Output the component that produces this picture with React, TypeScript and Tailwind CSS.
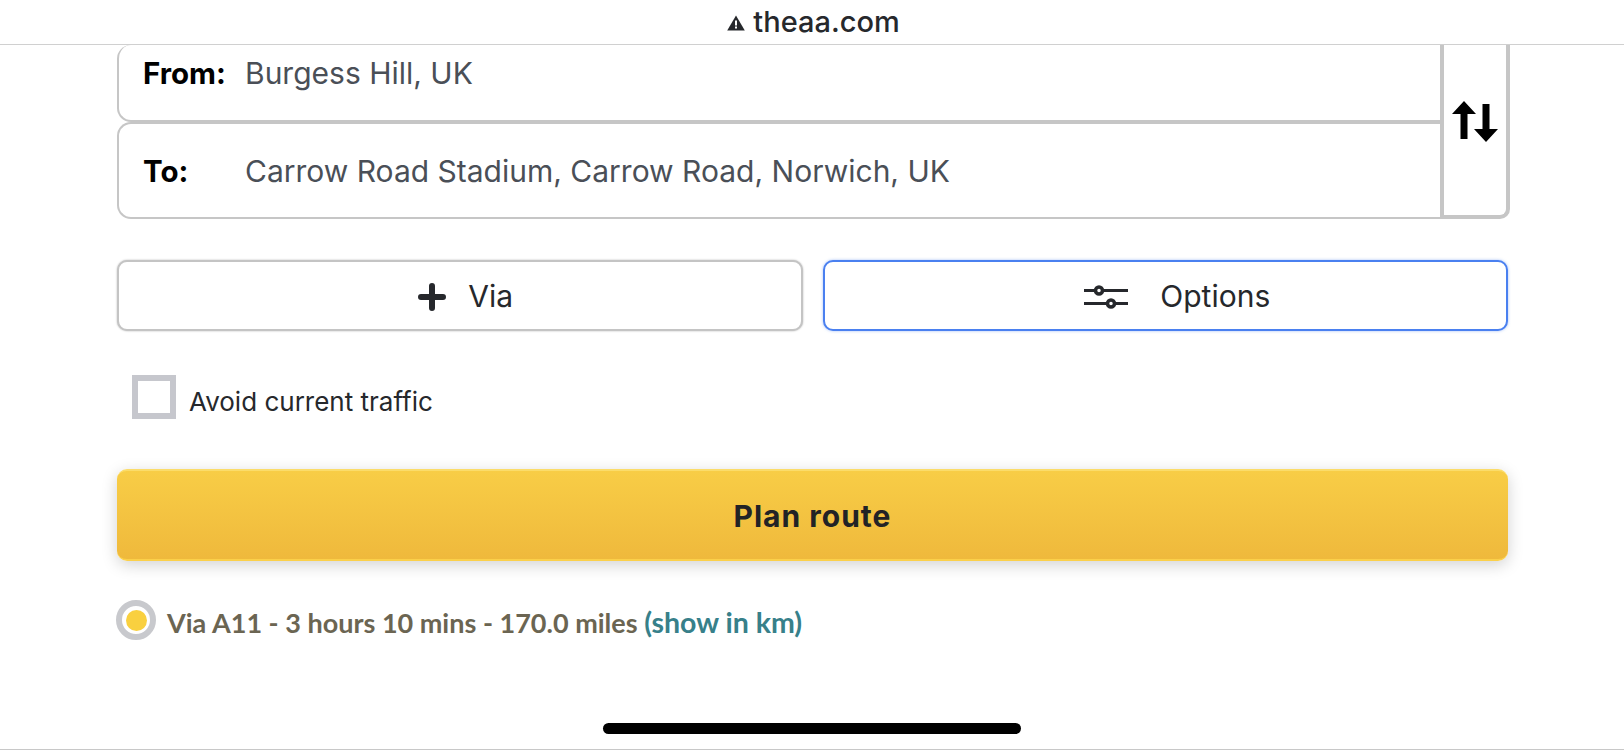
import type React from "react";

const plex = "font-['Inter','Noto_Sans',sans-serif]";

export default function App(): React.ReactElement {
  return (
    <div className={`w-[1624px] h-[750px] overflow-hidden bg-white flex flex-col ${plex}`}>
      <TopBar />
      <main className="flex-1 flex flex-col pl-[117px] pr-[116px]">
        <RouteFields />
        <div className="grid grid-cols-2 gap-[20px] mt-[41px]">
          <button className="h-[71px] flex items-center justify-center gap-[22px] pl-[12px] pt-[2px] bg-white border-2 border-[#c4c4c4] rounded-[10px] shadow-[0_0_2px_rgba(0,0,0,0.3)] text-[#26282c] text-[30px]">
            <PlusIcon />
            <span>Via</span>
          </button>
          <button className="h-[71px] flex items-center justify-center gap-[32px] pl-[24px] pt-[2px] bg-white border-2 border-[#4a80f0] rounded-[10px] shadow-[0_0_3px_rgba(74,128,240,0.5)] text-[#26282c] text-[30px]">
            <SlidersIcon />
            <span>Options</span>
          </button>
        </div>
        <label className="flex items-center gap-[13px] mt-[42px] ml-[15px]">
          <span className="w-[44px] h-[44px] border-[6px] border-[#c6c7cd] bg-white" />
          <span className="text-[26px] text-[#26282c] pt-[9px]">Avoid current traffic</span>
        </label>
        <button className="mt-[48px] h-[92px] rounded-[10px] border-y-2 border-t-[#fbdc6a] border-b-[#fbd04a] bg-gradient-to-b from-[#f8cd46] to-[#efb93c] shadow-[0_4px_16px_rgba(0,0,0,0.18)] text-[30px] font-bold tracking-[1px] text-[#222326] pt-[3px]">
          Plan route
        </button>
        <div className="flex items-center gap-[11px] mt-[36px] -ml-[1px]">
          <span className="w-[40px] h-[40px] rounded-full border-[6px] border-[#c8c9cd] bg-white flex items-center justify-center">
            <span className="w-[21px] h-[21px] rounded-full bg-[#f9d03f]" />
          </span>
          <p className="font-['Lato',sans-serif] font-bold text-[27px] text-[#6b6552] pt-[4px]">
            Via A11 - 3 hours 10 mins - 170.0 miles{" "}
            <span className="text-[#37808a] text-[28.5px]">(show in km)</span>
          </p>
        </div>
      </main>
      <div className="h-[27px] flex justify-center border-b border-[#c8c8c8]">
        <div className="w-[418px] h-[11px] rounded-full bg-black" />
      </div>
    </div>
  );
}

function TopBar() {
  return (
    <header className="h-[45px] shrink-0 flex items-center justify-center gap-[8px] pl-[3px] border-b border-[#d0d0d0] bg-white">
      <svg width="18" height="16" viewBox="0 0 18 16" className="mt-[2px]">
        <path d="M9 0.5 L17.8 15.5 H0.2 Z" fill="#26282c" />
        <rect x="8" y="5.5" width="2" height="5" fill="#fff" />
        <rect x="8" y="11.5" width="2" height="2" fill="#fff" />
      </svg>
      <span className="text-[29px] font-medium text-[#26282c] leading-none -mt-[2px]">theaa.com</span>
    </header>
  );
}

function RouteFields() {
  return (
    <div className="flex -mr-[2px]">
      <div className="flex-1 min-w-0 flex flex-col">
        <Field label="From:" value="Burgess Hill, UK" className="h-[77px] border-t-0 rounded-t-none items-baseline pt-[6px]" />
        <Field label="To:" value="Carrow Road Stadium, Carrow Road, Norwich, UK" className="h-[97px] items-baseline pt-[25px]" />
      </div>
      <div className="w-[70px] shrink-0 flex items-center justify-center border-x-4 border-b-4 border-l-[#c6c6c6] border-r-[#c6c6c6] border-b-[#c6c6c6] rounded-br-[10px] pb-[18px]">
        <SwapIcon />
      </div>
    </div>
  );
}

function Field({ label, value, className }: { label: string; value: string; className: string }) {
  return (
    <div className={`flex bg-white border-2 border-r-0 border-[#c6c6c6] rounded-l-[14px] ${className}`}>
      <span className="w-[126px] pl-[24px] shrink-0 text-[29.5px] font-bold text-black">{label}</span>
      <span className="text-[30px] text-[#4a4f57]">{value}</span>
    </div>
  );
}

function SwapIcon() {
  return (
    <svg width="46" height="41" viewBox="0 0 46 41" fill="#000">
      <path d="M12 0 L24 13 H15.5 V38 H8.5 V13 H0 Z" />
      <path d="M34 41 L22 28 H30.5 V3 H37.5 V28 H46 Z" />
    </svg>
  );
}

function PlusIcon() {
  return (
    <svg width="28" height="28" viewBox="0 0 28 28" fill="none" stroke="#26282c" strokeWidth="6" strokeLinecap="round">
      <path d="M14 3 V25 M3 14 H25" />
    </svg>
  );
}

function SlidersIcon() {
  return (
    <svg width="44" height="24" viewBox="0 0 44 24" fill="none" stroke="#26282c" strokeWidth="3">
      <path d="M0 5.5 H44 M0 18.5 H44" />
      <circle cx="15" cy="5.5" r="3.5" fill="#fff" strokeWidth="3.5" />
      <circle cx="27" cy="18.5" r="3.5" fill="#fff" strokeWidth="3.5" />
    </svg>
  );
}
